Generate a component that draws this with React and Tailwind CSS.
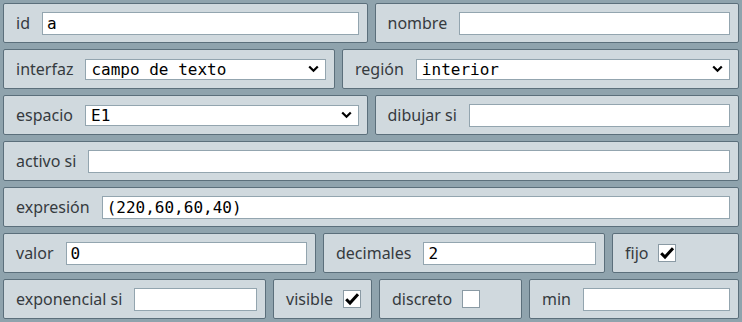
import React from "react";

const LABEL = "text-[16px] leading-[20px] text-[#363b3f] font-['Noto_Sans',sans-serif] whitespace-nowrap";
const MONO = "font-['DejaVu_Sans_Mono',monospace] text-[16px] text-black";

function Panel({ className = "", children, tight }) {
  return (
    <div
      className={`flex items-center h-full pl-3 pr-2 ${tight ? "gap-[10px]" : "gap-3"} bg-[#d0d9de] border border-[#5b6f7b] rounded-[2px] ${className}`}
    >
      {children}
    </div>
  );
}

function Field({ value = "" }) {
  return (
    <div className={`flex-1 min-w-0 h-[23px] bg-white border border-[#93a5af] pl-1 leading-[21px] ${MONO} whitespace-pre overflow-hidden`}>
      {value}
    </div>
  );
}

function Select({ value }) {
  return (
    <div className={`flex-1 min-w-0 h-[21px] bg-white border border-[#93a5af] pl-[5px] pr-[6px] flex items-center justify-between leading-[19px] ${MONO}`}>
      <span className="whitespace-pre">{value}</span>
      <svg width="11" height="8" viewBox="0 0 11 8" className="shrink-0">
        <path d="M1.2 1.5 L5.5 5.8 L9.8 1.5" fill="none" stroke="#000" strokeWidth="2.2" />
      </svg>
    </div>
  );
}

function Check({ checked }) {
  return (
    <div className="w-[18px] h-[18px] bg-white border border-[#8a9aa4] flex items-center justify-center shrink-0">
      {checked && (
        <svg width="16" height="16" viewBox="0 0 16 16">
          <path d="M2.2 8.2 L6 12 L14 3.2" fill="none" stroke="#000" strokeWidth="3" strokeLinejoin="miter" />
        </svg>
      )}
    </div>
  );
}

function Row({ children }) {
  return <div className="flex h-[40px] gap-[7px]">{children}</div>;
}

export default function App() {
  return (
    <div className="w-[742px] h-[322px] bg-[#8fa3ad] p-[3px] flex flex-col gap-[6px] overflow-hidden">
      <Row>
        <Panel className="flex-1">
          <span className={LABEL}>id</span>
          <Field value="a" />
        </Panel>
        <Panel className="flex-1">
          <span className={LABEL}>nombre</span>
          <Field />
        </Panel>
      </Row>
      <Row>
        <Panel className="w-[332px]">
          <span className={LABEL}>interfaz</span>
          <Select value="campo de texto" />
        </Panel>
        <Panel className="flex-1">
          <span className={LABEL}>región</span>
          <Select value="interior" />
        </Panel>
      </Row>
      <Row>
        <Panel className="flex-1">
          <span className={LABEL}>espacio</span>
          <Select value="E1" />
        </Panel>
        <Panel className="flex-1">
          <span className={LABEL}>dibujar si</span>
          <Field />
        </Panel>
      </Row>
      <Row>
        <Panel className="flex-1">
          <span className={LABEL}>activo si</span>
          <Field />
        </Panel>
      </Row>
      <Row>
        <Panel className="flex-1">
          <span className={LABEL}>expresión</span>
          <Field value="(220,60,60,40)" />
        </Panel>
      </Row>
      <Row>
        <Panel className="w-[313px]">
          <span className={LABEL}>valor</span>
          <Field value="0" />
        </Panel>
        <Panel className="w-[282px]">
          <span className={LABEL}>decimales</span>
          <Field value="2" />
        </Panel>
        <Panel className="flex-1" tight>
          <span className={LABEL}>fijo</span>
          <Check checked />
        </Panel>
      </Row>
      <Row>
        <Panel className="w-[263px]">
          <span className={LABEL}>exponencial si</span>
          <Field />
        </Panel>
        <Panel className="w-[99px]" tight>
          <span className={LABEL}>visible</span>
          <Check checked />
        </Panel>
        <Panel className="w-[143px]" tight>
          <span className={LABEL}>discreto</span>
          <Check />
        </Panel>
        <Panel className="flex-1">
          <span className={LABEL}>min</span>
          <Field />
        </Panel>
      </Row>
    </div>
  );
}
